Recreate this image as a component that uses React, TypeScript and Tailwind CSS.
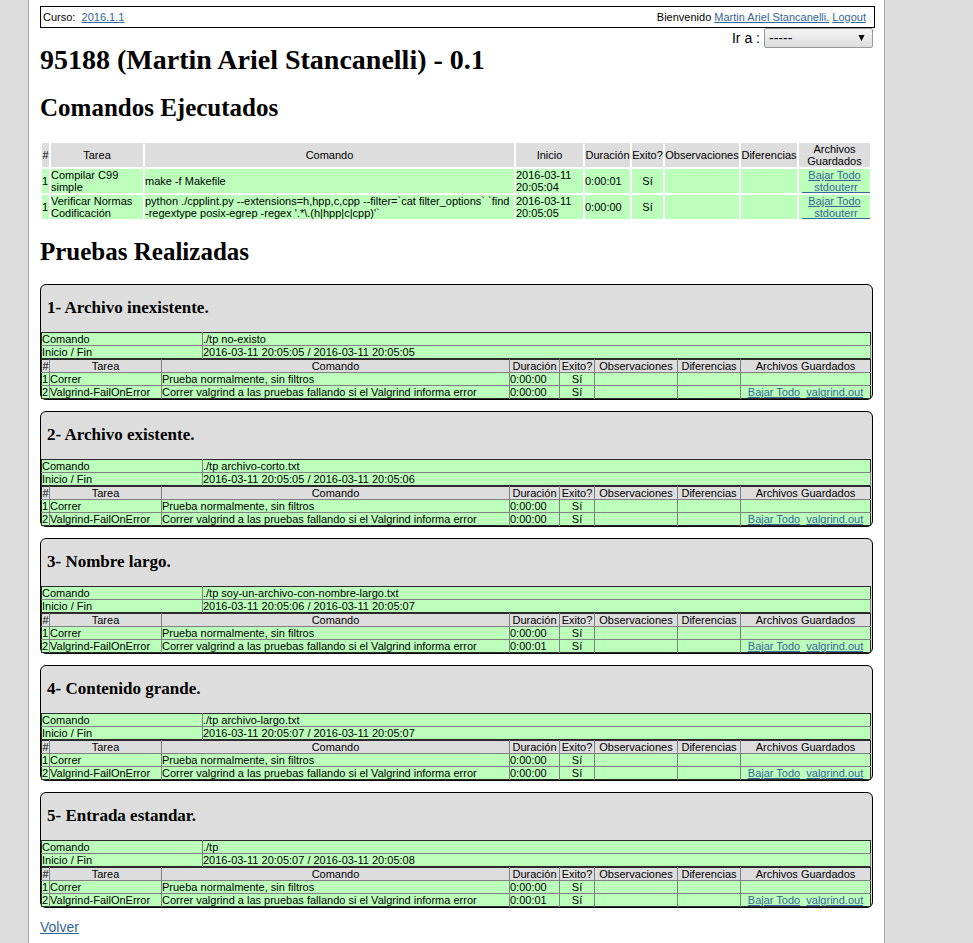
const GREEN_ROW = "bg-[#bbffbb]";
const link = "text-[#336699] underline";

type Command = { task: string; command: string; start: string; duration: string };
type Test = { title: string; command: string; range: string; durations: [string, string] };

const commands: Command[] = [
  { task: "Compilar C99 simple", command: "make -f Makefile", start: "2016-03-11 20:05:04", duration: "0:00:01" },
  {
    task: "Verificar Normas Codificación",
    command:
      "python ./cpplint.py --extensions=h,hpp,c,cpp --filter=`cat filter_options` `find -regextype posix-egrep -regex '.*\\.(h|hpp|c|cpp)'`",
    start: "2016-03-11 20:05:05",
    duration: "0:00:00",
  },
];

const tests: Test[] = [
  { title: "1- Archivo inexistente.", command: "./tp no-existo", range: "2016-03-11 20:05:05 / 2016-03-11 20:05:05", durations: ["0:00:00", "0:00:00"] },
  { title: "2- Archivo existente.", command: "./tp archivo-corto.txt", range: "2016-03-11 20:05:05 / 2016-03-11 20:05:06", durations: ["0:00:00", "0:00:00"] },
  { title: "3- Nombre largo.", command: "./tp soy-un-archivo-con-nombre-largo.txt", range: "2016-03-11 20:05:06 / 2016-03-11 20:05:07", durations: ["0:00:00", "0:00:01"] },
  { title: "4- Contenido grande.", command: "./tp archivo-largo.txt", range: "2016-03-11 20:05:07 / 2016-03-11 20:05:07", durations: ["0:00:00", "0:00:00"] },
  { title: "5- Entrada estandar.", command: "./tp", range: "2016-03-11 20:05:07 / 2016-03-11 20:05:08", durations: ["0:00:00", "0:00:01"] },
];

function CommandsTable() {
  return (
    <table className="mr-[3px] w-[calc(100%-3px)] table-fixed border-separate border-spacing-[2px] text-[11px] leading-[12px]">
      <colgroup>
        <col className="w-[7px]" />
        <col className="w-[92px]" />
        <col />
        <col className="w-[67px]" />
        <col className="w-[45px]" />
        <col className="w-[31px]" />
        <col className="w-[74px]" />
        <col className="w-[56px]" />
        <col className="w-[71px]" />
      </colgroup>
      <thead>
        <tr className="bg-[#dddddd]">
          {["#", "Tarea", "Comando", "Inicio", "Duración", "Exito?", "Observaciones", "Diferencias", "Archivos Guardados"].map((h) => (
            <th key={h} className="p-0 text-center font-normal">{h}</th>
          ))}
        </tr>
      </thead>
      <tbody>
        {commands.map((c) => (
          <tr key={c.task} className={GREEN_ROW}>
            <td className="p-0">1</td>
            <td className="p-0">{c.task}</td>
            <td className="p-0">{c.command}</td>
            <td className="p-0">{c.start}</td>
            <td className="p-0">{c.duration}</td>
            <td className="p-0 text-center">Sí</td>
            <td className="p-0" />
            <td className="p-0" />
            <td className="p-0 text-center">
              <a href="#todo" className={link}>Bajar Todo</a>{" \u00a0"}
              <a href="#stdouterr" className={link}>{"\u00a0\u00a0\u00a0\u00a0stdouterr\u00a0\u00a0\u00a0\u00a0"}</a>
            </td>
          </tr>
        ))}
      </tbody>
    </table>
  );
}

function TestCard({ test }: { test: Test }) {
  const cell = "border-r border-b border-[#808080] p-0";
  const tail = "border-b border-[#808080] p-0";
  const steps = [
    { name: "Correr", text: "Prueba normalmente, sin filtros" },
    { name: "Valgrind-FailOnError", text: "Correr valgrind a las pruebas fallando si el Valgrind informa error" },
  ];
  return (
    <section className="rounded-[6px] border border-black bg-[#dddddd] pr-px">
      <h3 className="pt-[12px] pb-[14px] pl-[6px] font-['Liberation_Serif',serif] text-[17px] leading-[21px] font-bold">{test.title}</h3>
      <table className="w-full table-fixed border-collapse border border-[#2b2b2b] text-[11px] leading-[12px]">
        <colgroup>
          <col className="w-[161px]" />
          <col />
        </colgroup>
        <tbody className={GREEN_ROW}>
          <tr>
            <th scope="row" className={`${cell} text-left font-normal`}>Comando</th>
            <td className={tail}>{test.command}</td>
          </tr>
          <tr>
            <th scope="row" className="border-r border-[#808080] p-0 text-left font-normal">Inicio / Fin</th>
            <td className="border-r border-[#808080] p-0">{test.range}</td>
          </tr>
        </tbody>
      </table>
      <table className="w-full table-fixed border-collapse border border-[#2b2b2b] text-[11px] leading-[12px]">
        <colgroup>
          <col className="w-[8px]" />
          <col className="w-[112px]" />
          <col />
          <col className="w-[50px]" />
          <col className="w-[35px]" />
          <col className="w-[83px]" />
          <col className="w-[63px]" />
          <col className="w-[130px]" />
        </colgroup>
        <thead>
          <tr>
            {["#", "Tarea", "Comando", "Duración", "Exito?", "Observaciones", "Diferencias", "Archivos Guardados"].map((h, i) => (
              <th key={h} className={`${i === 7 ? tail : cell} text-center font-normal`}>{h}</th>
            ))}
          </tr>
        </thead>
        <tbody className={GREEN_ROW}>
          {steps.map((s, i) => {
            const inner = i === 0 ? cell : "border-r border-[#808080] p-0";
            return (
              <tr key={s.name}>
                <td className={inner}>{i + 1}</td>
                <td className={inner}>{s.name}</td>
                <td className={inner}>{s.text}</td>
                <td className={inner}>{test.durations[i]}</td>
                <td className={`${inner} text-center`}>Sí</td>
                <td className={inner} />
                <td className={inner} />
                <td className={`${i === 0 ? tail : "p-0"} h-[12px] text-center`}>
                  {i === 1 && (
                    <>
                      <a href="#todo" className={link}>Bajar Todo</a>
                      {"\u00a0 "}
                      <a href="#valgrind" className={link}>valgrind.out</a>
                    </>
                  )}
                </td>
              </tr>
            );
          })}
        </tbody>
      </table>
    </section>
  );
}

export default function App() {
  return (
    <div className="min-h-screen bg-[#dddddd] pr-[88px] pl-[28px] font-['Liberation_Sans',Arial,sans-serif] text-black">
      <div className="min-h-screen border-x border-[#a9a9a9] bg-white pt-[6px] pr-[9px] pb-[7px] pl-[11px]">
        <header className="flex h-[22px] items-center justify-between border border-black pr-[8px] pl-[2px] text-[11px] leading-[12px]">
          <div>
            Curso:{"\u00a0 "}
            <a href="#curso" className={link}>2016.1.1</a>
          </div>
          <div>
            Bienvenido <a href="#perfil" className={link}>Martin Ariel Stancanelli.</a>{" "}
            <a href="#logout" className={link}>Logout</a>
          </div>
        </header>
        <div className="mr-[2px] flex h-[20px] items-center justify-end gap-[4px] text-[14px]">
          <label htmlFor="goto">Ir a :</label>
          <div className="relative">
            <select
              id="goto"
              className="block h-[20px] w-[109px] appearance-none rounded-[2px] border border-[#999999] bg-linear-to-b from-[#f4f4f4] to-[#dddddd] pl-[4px] text-[14px] leading-[16px]"
            >
              <option>-----</option>
            </select>
            <svg className="pointer-events-none absolute top-[7px] right-[8px]" width="7" height="6" viewBox="0 0 7 6" aria-hidden="true">
              <path d="M0.5 0H6.5L3.5 6Z" fill="black" />
            </svg>
          </div>
        </div>
        <h1 className="-mt-[4px] font-['Liberation_Serif',serif] text-[28px] leading-[32px] font-bold">
          95188 (Martin Ariel Stancanelli) - 0.1
        </h1>
        <h2 className="mt-[18px] mb-[19px] font-['Liberation_Serif',serif] text-[25px] leading-[28px] font-bold">Comandos Ejecutados</h2>
        <CommandsTable />
        <h2 className="mt-[17px] mb-[18px] font-['Liberation_Serif',serif] text-[25px] leading-[28px] font-bold">Pruebas Realizadas</h2>
        <div className="mr-[2px] flex flex-col gap-[11px]">
          {tests.map((t) => (
            <TestCard key={t.title} test={t} />
          ))}
        </div>
        <div className="mt-[11px] text-[14px] leading-[16px]">
          <a href="#volver" className={link}>Volver</a>
        </div>
      </div>
    </div>
  );
}
